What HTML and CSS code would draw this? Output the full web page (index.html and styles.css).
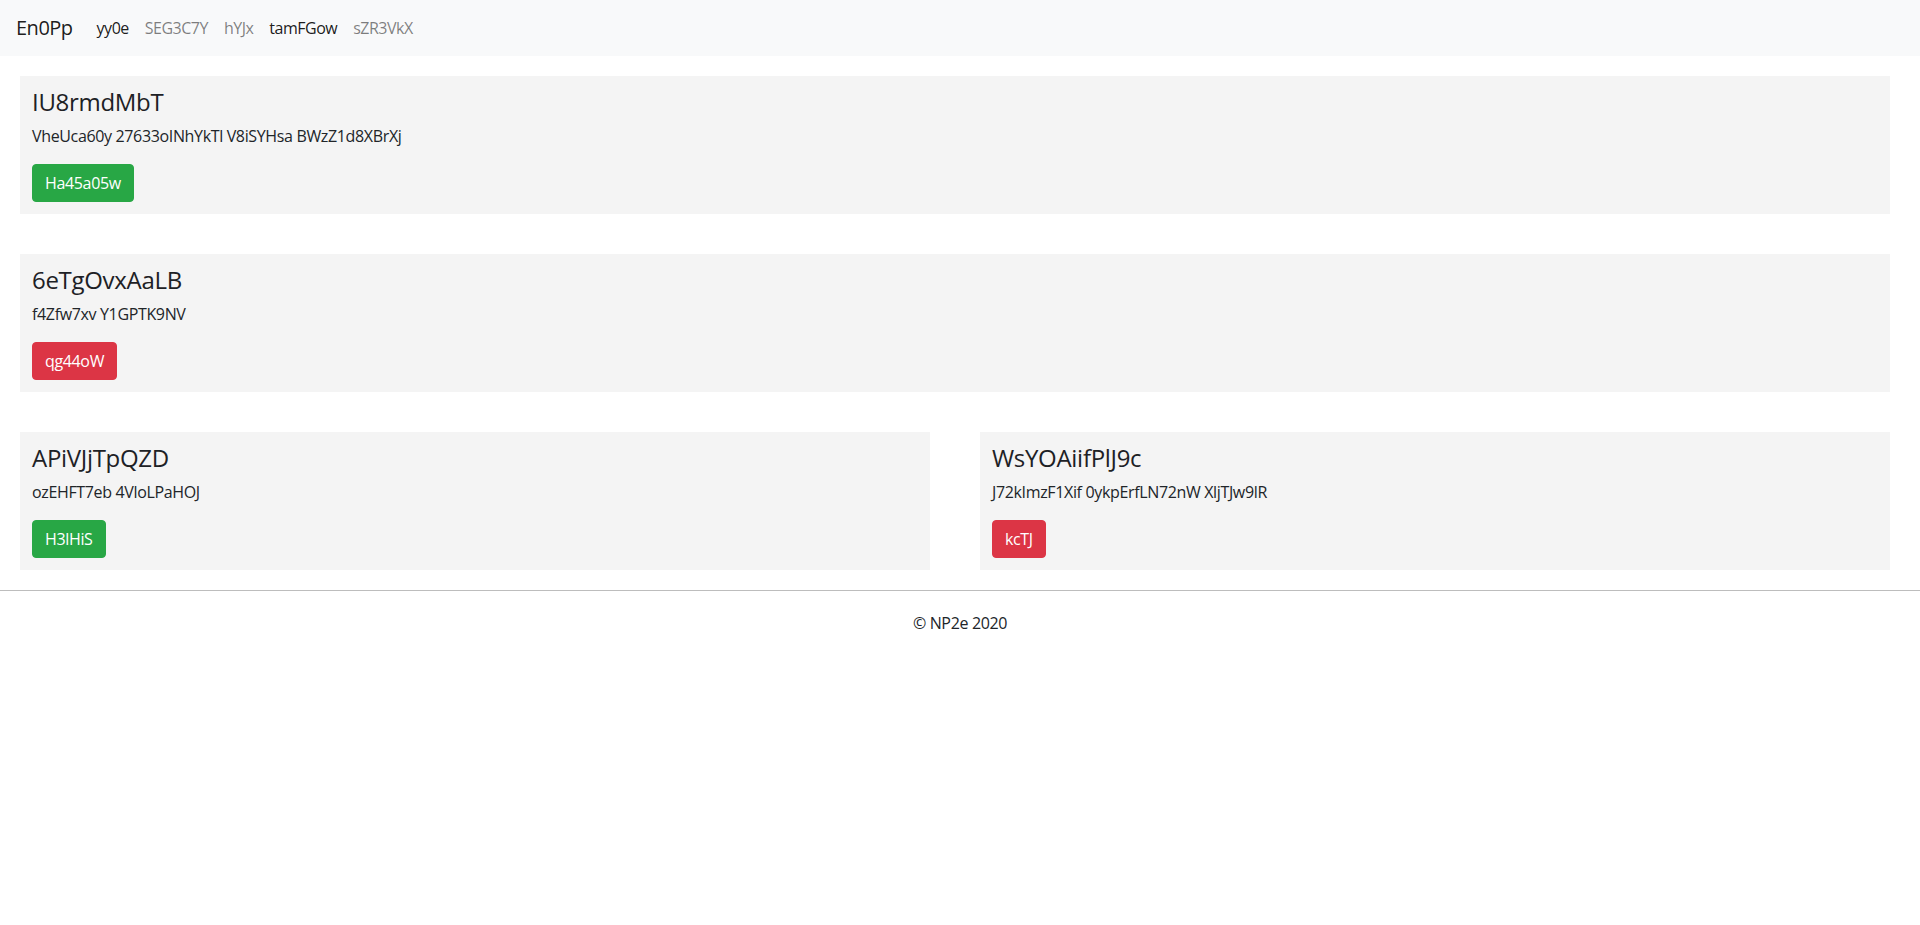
FILE: index.html
```html
<!DOCTYPE html>
<html>
<head>
<meta charset="utf-8">
<link rel="stylesheet" href="styles.css">
</head>
<body>
<nav class="navbar">
  <a class="brand" href="#">En0Pp</a>
  <ul class="nav">
    <li><a class="nav-link active" href="#">yy0e</a></li>
    <li><a class="nav-link" href="#">SEG3C7Y</a></li>
    <li><a class="nav-link" href="#">hYJx</a></li>
    <li><a class="nav-link active" href="#">tamFGow</a></li>
    <li><a class="nav-link" href="#">sZR3VkX</a></li>
  </ul>
</nav>
<main class="content">
  <section class="card">
    <h4 class="card-title">IU8rmdMbT</h4>
    <p class="card-text">VheUca60y 27633oINhYkTl V8iSYHsa BWzZ1d8XBrXj</p>
    <a class="btn btn-success" href="#">Ha45a05w</a>
  </section>
  <section class="card">
    <h4 class="card-title">6eTgOvxAaLB</h4>
    <p class="card-text">f4Zfw7xv Y1GPTK9NV</p>
    <a class="btn btn-danger" href="#">qg44oW</a>
  </section>
  <div class="row">
    <section class="card">
      <h4 class="card-title">APiVJjTpQZD</h4>
      <p class="card-text">ozEHFT7eb 4VloLPaHOJ</p>
      <a class="btn btn-success" href="#">H3lHiS</a>
    </section>
    <section class="card">
      <h4 class="card-title">WsYOAiifPlJ9c</h4>
      <p class="card-text">J72kImzF1Xif 0ykpErfLN72nW XljTJw9lR</p>
      <a class="btn btn-danger" href="#">kcTJ</a>
    </section>
  </div>
</main>
<hr class="divider">
<footer class="footer">© NP2e 2020</footer>
</body>
</html>
```
FILE: styles.css
```css
* { box-sizing: border-box; }
html, body { margin: 0; padding: 0; }
body {
  font-family: "Open Sans", "Noto Sans", sans-serif;
  font-size: 16px;
  line-height: 1.5;
  letter-spacing: -0.35px;
  color: #212529;
  background: #fff;
}
a { text-decoration: none; }
.navbar {
  display: flex;
  align-items: center;
  height: 56px;
  padding: 8px 16px;
  background: #f8f9fa;
}
.brand {
  font-size: 20px;
  line-height: 30px;
  padding: 5px 0;
  margin-right: 16px;
  letter-spacing: -0.5px;
  color: rgba(0,0,0,.9);
}
.nav {
  display: flex;
  list-style: none;
  margin: 0;
  padding: 0;
}
.nav-link {
  display: block;
  padding: 8px;
  letter-spacing: -0.5px;
  color: rgba(0,0,0,.5);
}
.nav-link.active { color: rgba(0,0,0,.9); }
.content {
  display: flex;
  flex-direction: column;
  gap: 40px;
  padding: 20px 30px 0 20px;
}
.row {
  display: grid;
  grid-template-columns: 1fr 1fr;
  gap: 50px;
}
.card {
  background: #f4f4f4;
  padding: 12px;
}
.card-title {
  font-size: 24px;
  font-weight: 500;
  line-height: 28px;
  letter-spacing: -0.3px;
  margin: 0 0 8px;
  color: #1d2125;
}
.card-text { margin: 0 0 16px; }
.btn {
  display: inline-block;
  padding: 6px 12px;
  font-size: 16px;
  line-height: 24px;
  border-radius: 4px;
  color: #fff;
  border: 1px solid transparent;
}
.btn-success { background: #28a745; border-color: #28a745; }
.btn-danger { background: #dc3545; border-color: #dc3545; }
.divider {
  margin: 20px 0 0;
  border: 0;
  border-top: 1px solid #bdbdbd;
  height: 0;
}
.footer {
  text-align: center;
  padding: 20px 0;
  line-height: 24px;
}
```
